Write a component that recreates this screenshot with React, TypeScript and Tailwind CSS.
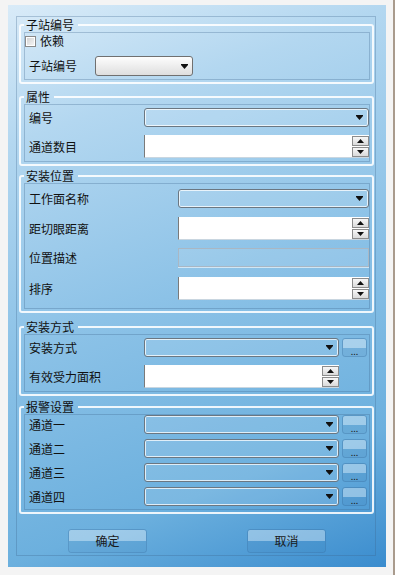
import React from "react";

const DownArrow = () => (
  <svg width="7" height="5" viewBox="0 0 7 5">
    <path d="M0 0h7v1L3.5 5 0 1z" fill="#111" />
  </svg>
);

const SpinBtn = ({ up }: { up?: boolean }) => (
  <div className="flex h-[10px] w-[17px] items-center justify-center border border-[#8c8c8c] bg-[linear-gradient(#f7f7f7,#dadada)]">
    <svg width="7" height="4" viewBox="0 0 7 4">
      {up ? <path d="M0 4h7L3.5 0z" fill="#111" /> : <path d="M0 0h7L3.5 4z" fill="#111" />}
    </svg>
  </div>
);

const Combo = ({ w }: { w?: string }) => (
  <div className={`flex h-[19px] items-center justify-end rounded-[3px] border border-[#6b7782] bg-white/10 pr-[5px] shadow-[inset_0_0_0_1px_rgba(255,255,255,0.75)] ${w ?? "flex-1"}`}>
    <DownArrow />
  </div>
);

const Spin = ({ w }: { w?: string }) => (
  <div className={`flex h-[23px] items-center bg-white border-l border-[#7a7a7a] border-b border-b-[#c9d6e0] ${w ?? "flex-1"}`}>
    <div className="flex-1" />
    <div className="flex flex-col gap-[1px]">
      <SpinBtn up />
      <SpinBtn />
    </div>
  </div>
);

const More = () => (
  <div className="ml-[3px] flex h-[19px] w-[25px] flex-col overflow-hidden rounded-[3px] border border-[rgba(50,100,150,0.35)]">
    <div className="h-[9px] bg-white/35" />
    <div className="flex flex-1 items-center justify-center bg-[rgba(40,90,140,0.08)] text-[9px] leading-[6px] text-[#222]">...</div>
  </div>
);

const Row = ({ label, lw, className, children }: { label: string; lw: string; className?: string; children: React.ReactNode }) => (
  <div className={`flex items-center ${className ?? ""}`}>
    <span className={`${lw} shrink-0 text-[12px] leading-[14px] text-[#111]`}>{label}</span>
    {children}
  </div>
);

const Group = ({ title, className, innerH, children }: { title: string; className: string; innerH: string; children: React.ReactNode }) => (
  <fieldset className={`ml-[2px] mr-[1px] rounded-[3px] border-2 border-[rgba(255,255,255,0.88)] ${className}`}>
    <legend className="ml-[3px] pl-[2px] pr-[4px] text-[12px] leading-[14px] text-[#111]">{title}</legend>
    <div className={`ml-[3px] mr-[2px] mb-[2px] border border-[rgba(60,100,140,0.3)] ${innerH}`}>{children}</div>
  </fieldset>
);

const Btn = ({ className, children }: { className: string; children: React.ReactNode }) => (
  <div className={`relative flex h-[24px] w-[79px] flex-col overflow-hidden rounded-[3px] border border-[rgba(50,100,150,0.3)] ${className}`}>
    <div className="h-[11px] bg-white/35" />
    <div className="flex-1 bg-[rgba(40,90,140,0.06)]" />
    <span className="absolute inset-0 flex items-center justify-center text-[12px] leading-[14px] text-[#1a1a1a]">{children}</span>
  </div>
);

export default function App() {
  return (
    <div className="flex h-[575px] w-[397px] bg-[#f4f4f4] font-['Noto_Sans_CJK_SC','Liberation_Sans',sans-serif]">
      <div className="w-[393px] pl-[8px] pt-[5px]">
        <div className="h-[562px] w-[378px] bg-[linear-gradient(160deg,#d9ebf8_0%,#b3d7f0_20%,#8cc2e7_50%,#6cb0de_80%,#3a8cce_100%)] pl-[8px] pt-[11px]">
          <div className="flex h-[540px] w-[360px] flex-col border border-[rgba(60,100,140,0.3)]">
            <Group title="子站编号" className="mt-[1px]" innerH="h-[48px]">
              <div className="mt-[1px] flex h-[14px] items-center">
                <div className="h-[11px] w-[11px] border border-[#8a8a8a] bg-[linear-gradient(135deg,#d0d0d0,#f8f8f8)] shadow-[inset_0_0_0_1px_#fff]" />
                <span className="ml-[4px] text-[12px] leading-[14px] text-[#111]">依赖</span>
              </div>
              <Row label="子站编号" lw="w-[66px]" className="mt-[8px] pl-[4px]">
                <div className="flex h-[20px] w-[98px] items-center justify-end rounded-[3px] border border-[#707070] bg-[linear-gradient(#fdfdfd,#dedede)] pr-[4px]">
                  <DownArrow />
                </div>
              </Row>
            </Group>

            <Group title="属性" className="mt-[6px]" innerH="h-[58px]">
              <Row label="编号" lw="w-[115px]" className="mt-[3px] pl-[4px]">
                <Combo />
              </Row>
              <Row label="通道数目" lw="w-[115px]" className="mt-[8px] pl-[4px]">
                <Spin />
              </Row>
            </Group>

            <Group title="安装位置" className="mt-[3px]" innerH="h-[126px]">
              <Row label="工作面名称" lw="w-[149px]" className="mt-[5px] pl-[4px]">
                <Combo />
              </Row>
              <Row label="距切眼距离" lw="w-[149px]" className="mt-[9px] pl-[4px]">
                <Spin />
              </Row>
              <Row label="位置描述" lw="w-[149px]" className="mt-[8px] pl-[4px]">
                <div className="h-[19px] flex-1 border border-[#a9b7c4] bg-white/10 shadow-[0_1px_0_rgba(255,255,255,0.6)]" />
              </Row>
              <Row label="排序" lw="w-[149px]" className="mt-[10px] pl-[4px]">
                <Spin />
              </Row>
            </Group>

            <Group title="安装方式" className="mt-[7px]" innerH="h-[58px]">
              <Row label="安装方式" lw="w-[115px]" className="mt-[3px] pl-[4px] pr-[2px]">
                <Combo />
                <More />
              </Row>
              <Row label="有效受力面积" lw="w-[115px]" className="mt-[8px] pl-[4px]">
                <Spin w="w-[195px]" />
              </Row>
            </Group>

            <Group title="报警设置" className="mt-[4px]" innerH="h-[96px]">
              {["通道一", "通道二", "通道三", "通道四"].map((name, i) => (
                <Row key={name} label={name} lw="w-[115px]" className={`pl-[4px] pr-[2px] ${i === 0 ? "" : "mt-[5px]"}`}>
                  <Combo />
                  <More />
                </Row>
              ))}
            </Group>

            <div className="mt-[15px] flex">
              <Btn className="ml-[51px]">确定</Btn>
              <Btn className="ml-[100px]">取消</Btn>
            </div>
          </div>
        </div>
      </div>
      <div className="w-[2px] bg-[#a99b8d]" />
      <div className="flex-1 bg-white" />
    </div>
  );
}
